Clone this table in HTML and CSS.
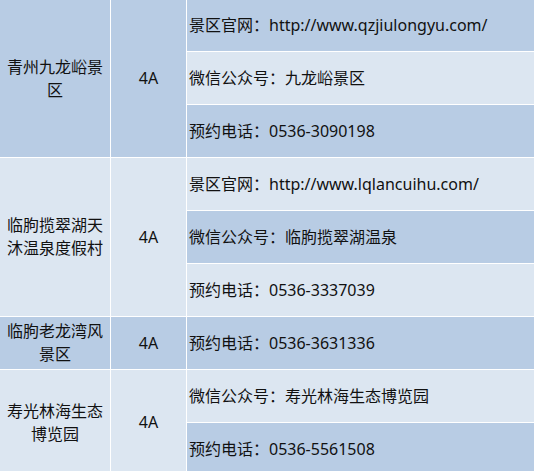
FILE: index.html
```html
<!DOCTYPE html>
<html lang="zh-CN">
<head>
<meta charset="utf-8">
<title>景区</title>
<link rel="stylesheet" href="styles.css">
</head>
<body>
<table class="spots">
  <colgroup>
    <col class="c-name">
    <col class="c-grade">
    <col class="c-info">
  </colgroup>
  <tbody>
    <tr class="first dark">
      <td class="name" rowspan="3">青州九龙峪景区</td>
      <td class="grade" rowspan="3">4A</td>
      <td class="info">景区官网：http://www.qzjiulongyu.com/</td>
    </tr>
    <tr class="light">
      <td class="info">微信公众号：九龙峪景区</td>
    </tr>
    <tr class="dark">
      <td class="info">预约电话：0536-3090198</td>
    </tr>
    <tr class="light">
      <td class="name" rowspan="3">临朐揽翠湖天沐温泉度假村</td>
      <td class="grade" rowspan="3">4A</td>
      <td class="info">景区官网：http://www.lqlancuihu.com/</td>
    </tr>
    <tr class="dark">
      <td class="info">微信公众号：临朐揽翠湖温泉</td>
    </tr>
    <tr class="light">
      <td class="info">预约电话：0536-3337039</td>
    </tr>
    <tr class="dark">
      <td class="name">临朐老龙湾风景区</td>
      <td class="grade">4A</td>
      <td class="info">预约电话：0536-3631336</td>
    </tr>
    <tr class="light">
      <td class="name" rowspan="2">寿光林海生态博览园</td>
      <td class="grade" rowspan="2">4A</td>
      <td class="info">微信公众号：寿光林海生态博览园</td>
    </tr>
    <tr class="dark">
      <td class="info">预约电话：0536-5561508</td>
    </tr>
  </tbody>
</table>
</body>
</html>
```
FILE: styles.css
```css
html, body {
  margin: 0;
  padding: 0;
  background: #ffffff;
}

body {
  font-family: "Noto Sans", "Noto Sans CJK SC", sans-serif;
  font-size: 16px;
  line-height: 23px;
  color: #111;
}

.spots {
  border-collapse: separate;
  border-spacing: 0;
  table-layout: fixed;
  width: 535px;
}

.c-name { width: 111px; }
.c-grade { width: 76px; }
.c-info { width: 348px; }

.spots tr { height: 53px; }
.spots tr.first { height: 52px; }

.spots td {
  border-right: 1px solid #ffffff;
  border-bottom: 1px solid #ffffff;
  padding: 0 2px;
  vertical-align: middle;
  box-sizing: border-box;
}

.dark td { background: #b8cce4; }
.light td { background: #dce6f1; }

.name, .grade {
  text-align: center;
}

.info {
  text-align: left;
  white-space: nowrap;
}
```
